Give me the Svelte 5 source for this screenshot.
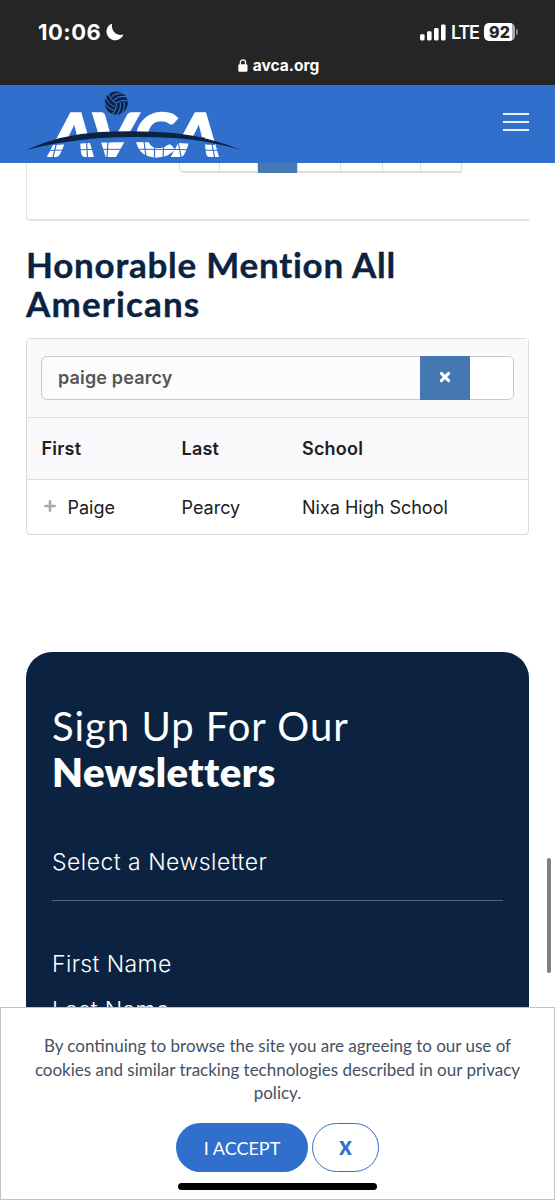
<script>
  const pages = [40, 38, 40, 43, 42, 38, 41];
  const columns = ['First', 'Last', 'School'];
  const players = [{ first: 'Paige', last: 'Pearcy', school: 'Nixa High School' }];
</script>

<div class="screen">
  <div class="status">
    <div class="status-row">
      <div class="clock">
        <span>10:06</span>
        <svg width="18" height="18" viewBox="0 0 18 18"><path d="M6.2.4A8.7 8.7 0 1 0 17.4 11.4C11 13.6 4.600 8 6.200.4Z" fill="#fff" /></svg>
      </div>
      <div class="signal">
        <svg width="26" height="17" viewBox="0 0 26 17" fill="#fff">
          <rect x="0" y="10.3" width="4.6" height="6.2" rx="1.4" /><rect x="7" y="7.3" width="4.6" height="9.2" rx="1.4" />
          <rect x="14" y="4" width="4.6" height="12.5" rx="1.4" /><rect x="21" y=".5" width="4.6" height="16" rx="1.4" />
        </svg>
        <span class="lte">LTE</span>
        <span class="battery">92</span>
        <i class="nub"></i>
      </div>
    </div>
    <div class="address">
      <svg width="10" height="13" viewBox="0 0 10 13"><rect x=".3" y="5.2" width="9.2" height="7.5" rx="1.3" fill="#fff" /><path d="M2.3 6V3.5a2.6 2.6 0 0 1 5.2 0V6" fill="none" stroke="#fff" stroke-width="1.3" /></svg>
      <span>avca.org</span>
    </div>
  </div>

  <header>
    <svg class="logo" width="216" height="70" viewBox="26 89 216 70">
      <g class="word">
        <text transform="translate(49 155.500) skewX(-7)" x="0" y="0" textLength="43" lengthAdjust="spacingAndGlyphs">A</text>
        <text transform="translate(88.500 155.500) skewX(-7)" x="0" y="0" textLength="45" lengthAdjust="spacingAndGlyphs">V</text>
        <text transform="translate(132.500 155.500) skewX(-7)" x="0" y="0" textLength="41" lengthAdjust="spacingAndGlyphs">C</text>
        <text transform="translate(173 155.500) skewX(-7)" x="0" y="0" textLength="44" lengthAdjust="spacingAndGlyphs">A</text>
      </g>
      <path d="M66 137H80L81 157.500H60.500ZM190 137H204.500L206 157.500H185Z" fill="#306fcc" />
      <path d="M50 142Q133 127 218 142L214 145Q133 139 54 145Z" fill="#306fcc" />
      <path d="M46 150.500Q133 148 220 150.500M57 141l-4 16M86.500 141l1 16M108 141l-1 16M144 141l2 16M154.500 141v16M164 141l-1 16M178 141l3 16M211.500 141l3 16" stroke="#306fcc" stroke-width="1.2" fill="none" />
      <path d="M26 150Q62 134 100 132Q137 130 174 133Q210 137 241 150Q207 140 174 138Q137 136 100 138Q62 141 26 150Z" fill="#0b2340" />
      <g transform="translate(116.300 103)">
        <circle r="11.500" fill="#0b2340" />
        <g fill="none" stroke="#306fcc" stroke-width="1.15">
          {#each [0, 120, 240] as turn}
            <path transform="rotate({turn})" d="M0 0Q6-4 11.300-2M-2.300-3.300Q4-8 9.800-6M-4.800-6Q0-10.500 6.500-9.800" />
          {/each}
        </g>
      </g>
    </svg>
    <div class="burger"><i></i><i></i><i></i></div>
  </header>

  <main>
    <section class="previous">
      <div class="pager">
        {#each pages as width, n}<span class:active={n === 2} style:width="{width}px"></span>{/each}
      </div>
    </section>

    <h2>Honorable Mention All<br /><span class="second">Americans</span></h2>

    <section class="table">
      <div class="search">
        <div class="field">
          <span class="query">paige pearcy</span>
          <span class="clear"><svg width="12" height="12" viewBox="0 0 12 12"><path d="M2.4 2.4l7.2 7.2M9.6 2.4L2.4 9.6" stroke="#fff" stroke-width="3" stroke-linecap="round" /></svg></span>
          <span class="rest"></span>
        </div>
      </div>
      <div class="row head">
        {#each columns as c}<span>{c}</span>{/each}
      </div>
      {#each players as p}
        <div class="row">
          <span class="name"><svg width="12" height="12" viewBox="0 0 12 12"><path d="M6 1.3v9.4M1.3 6h9.4" stroke="#aaa" stroke-width="2.6" stroke-linecap="round" /></svg>{p.first}</span>
          <span>{p.last}</span>
          <span>{p.school}</span>
        </div>
      {/each}
    </section>

    <section class="signup">
      <h3><span class="lead">Sign Up For Our</span><br /><b>Newsletters</b></h3>
      <div class="select">Select a Newsletter</div>
      <div class="label">First Name</div>
      <div class="label">Last Name</div>
    </section>
  </main>

  <i class="scrollbar"></i>

  <aside>
    <p>By continuing to browse the site you are agreeing to our use of<br />cookies and similar tracking technologies described in our privacy<br />policy.</p>
    <div class="actions">
      <button class="accept">I ACCEPT</button>
      <button class="close">X</button>
    </div>
    <i class="home"></i>
  </aside>
</div>

<style>
  :global(body) { margin: 0; background: #fff; }
  * { box-sizing: border-box; }
  .screen { position: relative; width: 555px; height: 1200px; overflow: hidden; background: #fff; font-family: Inter, sans-serif; color: #202020; }
  svg { display: block; flex: none; }
  .status { height: 85px; background: #252525; color: #fff; }
  .status-row { display: flex; justify-content: space-between; padding: 19px 37px 0 38px; height: 56px; }
  .clock { display: flex; gap: 6px; height: 26px; align-items: center; font-size: 22px; font-weight: 700; letter-spacing: .5px; }
  .clock svg { margin-left: -1px; }
  .signal { display: flex; align-items: center; height: 26px; }
  .lte { font-size: 18px; font-weight: 600; margin-left: 5px; width: 28px; letter-spacing: -1.2px; }
  .battery { margin-left: 5px; width: 31px; height: 18px; border-radius: 5px; background: linear-gradient(90deg, #fff 91%, #aaa 91%); color: #252525; font-size: 16px; line-height: 18px; font-weight: 800; text-align: center; }
  .nub { width: 2px; height: 6px; margin-left: 1px; background: #888; border-radius: 0 2px 2px 0; }
  .address { display: flex; justify-content: center; align-items: center; gap: 5px; height: 18px; font-size: 15.5px; font-weight: 700; padding-left: 2px; }
  header { height: 78px; padding: 4px 26px 0; background: #306fcc; display: flex; justify-content: space-between; align-items: flex-start; }
  .logo { overflow: visible; }
  .word text { font-family: Lato, sans-serif; font-weight: 900; font-size: 59px; fill: #fff; stroke: #fff; stroke-width: 2px; }
  .burger { display: flex; flex-direction: column; gap: 6px; margin-top: 24px; width: 26px; }
  .burger i { height: 2px; background: #e8f0ff; }
  main { padding: 0 26px; }
  .previous { height: 58px; border: solid #e2e2e2; border-width: 0 0 2px 1px; border-radius: 0 0 0 4px; }
  .pager { display: flex; width: 283px; height: 10px; margin-left: 152px; border: solid #ddd; border-width: 0 1px 2px 1px; border-radius: 0 0 2px 5px; }
  .pager span { flex: none; border-right: 1px solid #ddd; }
  .pager .active { background: #4578b2; height: 10px; }
  .pager span:last-child { flex: 1; border: 0; }
  h2 { margin: 24px 0 14px; height: 79px; font: 700 35px/39px Lato, sans-serif; -webkit-text-stroke: .35px #0b2340; color: #0b2340; letter-spacing: .75px; white-space: nowrap; }
  .second { letter-spacing: 1.15px; }
  .table { height: 197px; border: 1px solid #dadadd; border-radius: 4px; }
  .search { height: 79px; padding: 17px 14px 0; background: #fafafa; border-bottom: 1px solid #dddde4; }
  .field { display: flex; height: 44px; border: 1px solid #c8c8c8; border-radius: 6px; background: #fcfcfc; }
  .query { flex: 1; padding-left: 16px; font-size: 18px; font-weight: 600; line-height: 42px; color: #555; letter-spacing: .15px; }
  .clear { width: 50px; margin: -1px 0; background: #4578b2; display: flex; align-items: center; justify-content: center; }
  .clear svg { margin-top: -3px; }
  .rest { width: 43px; background: #fff; border-radius: 0 5px 5px 0; }
  .row { display: grid; grid-template-columns: 140px 120.500px 1fr; padding-left: 14.500px; font-size: 18px; line-height: 55px; }
  .head { height: 62px; line-height: 62px; background: #f9f9fb; border-bottom: 1px solid #dddde0; font-weight: 600; letter-spacing: .2px; }
  .name { display: flex; align-items: center; gap: 12px; padding-left: 2px; }
  .name svg { margin-top: -3px; }
  .signup { margin-top: 117px; height: 380px; padding: 51px 26px 0; border-radius: 26px 26px 0 0; background: #0b2340; color: #fff; }
  h3 { margin: 0; height: 135px; font: 400 40px/46px Lato, sans-serif; white-space: nowrap; }
  .lead { letter-spacing: .98px; }
  h3 b { font-weight: 800; letter-spacing: .45px; }
  .select { height: 63px; border-bottom: 1px solid #4f637d; font-size: 23px; line-height: 48px; margin-bottom: 40px; letter-spacing: .48px; font-weight: 350; }
  .label { height: 46px; font-size: 23px; line-height: 46px; letter-spacing: .38px; font-weight: 350; }
  .scrollbar { position: absolute; left: 547px; top: 858px; width: 4px; height: 115px; border-radius: 2px; background: #808080; }
  aside { position: absolute; left: 0; right: 0; bottom: 0; height: 193px; padding-top: 26px; background: #fff; border: 1px solid #c4c4c8; display: flex; flex-direction: column; align-items: center; }
  p { margin: 0; font: 400 17px/23.5px Lato, sans-serif; color: #435065; text-align: center; white-space: nowrap; }
  .actions { display: flex; gap: 4px; margin-top: 18.500px; }
  button { height: 49px; padding: 0; border-radius: 25px; font: 400 18px Lato, sans-serif; }
  .accept { width: 132px; border: 0; background: #306fcc; color: #fff; }
  .close { width: 67px; border: 1px solid #306fcc; background: #fff; color: #306fcc; font-weight: 800; }
  .home { width: 199px; height: 7px; margin-top: 10.500px; border-radius: 4px; background: #000; }
</style>
